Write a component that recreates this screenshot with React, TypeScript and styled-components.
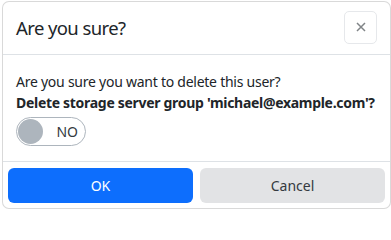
import styled, { createGlobalStyle } from "styled-components";

const GlobalStyle = createGlobalStyle`
  html, body {
    margin: 0;
    padding: 0;
    background: #ffffff;
  }
  body {
    font-family: "Noto Sans", "Open Sans", sans-serif;
    color: #212529;
    overflow: hidden;
  }
`;

const Page = styled.div`
  width: 391px;
  height: 210px;
  padding: 1px 0 0 2px;
  box-sizing: border-box;
  overflow: hidden;
`;

const Modal = styled.div`
  width: 389px;
  height: 208px;
  box-sizing: border-box;
  border: 1px solid rgba(0, 0, 0, 0.15);
  border-radius: 7px;
  display: flex;
  flex-direction: column;
  background: #fff;
`;

const Header = styled.div`
  height: 53px;
  box-sizing: border-box;
  display: flex;
  align-items: center;
  justify-content: space-between;
  padding: 0 13px 2px 13px;
  border-bottom: 1px solid #dee2e6;
`;

const Title = styled.h5`
  margin: 0;
  font-size: 18.5px;
  font-weight: 400;
  letter-spacing: -0.6px;
`;

const CloseButton = styled.button`
  width: 33px;
  height: 33px;
  border: 1px solid #e6e8eb;
  border-radius: 5px;
  background: #fff;
  display: flex;
  align-items: center;
  justify-content: center;
  padding: 0;
  color: #808487;
`;

const Body = styled.div`
  padding: 16px 13px 0;
  height: 107px;
  box-sizing: border-box;
  border-bottom: 1px solid #dee2e6;
`;

const Line = styled.p<{ $bold?: boolean }>`
  margin: 0;
  font-size: 14px;
  line-height: 21px;
  font-weight: ${(p) => (p.$bold ? 700 : 400)};
  letter-spacing: ${(p) => (p.$bold ? "-0.3px" : "-0.25px")};
`;

const Toggle = styled.div`
  margin-top: 4px;
  width: 70px;
  height: 29px;
  box-sizing: border-box;
  border: 1px solid #adb5bd;
  border-radius: 15px;
  display: flex;
  align-items: center;
  padding: 0 7px 0 1px;
  justify-content: space-between;
`;

const Knob = styled.span`
  width: 25px;
  height: 25px;
  border-radius: 50%;
  background: #adb5bd;
`;

const ToggleLabel = styled.span`
  font-size: 14px;
  color: #343a40;
`;

const Footer = styled.div`
  flex: 1;
  display: flex;
  gap: 7px;
  padding: 6px 5px 0 5px;
  box-sizing: border-box;
`;

const Action = styled.button<{ $primary?: boolean }>`
  flex: 1;
  height: 35px;
  border: none;
  border-radius: 6px;
  font-family: inherit;
  font-size: 14px;
  background: ${(p) => (p.$primary ? "#0d6efd" : "#e2e3e5")};
  color: ${(p) => (p.$primary ? "#ffffff" : "#343a40")};
`;

export default function App() {
  return (
    <>
      <GlobalStyle />
      <Page>
        <Modal>
          <Header>
            <Title>Are you sure?</Title>
            <CloseButton aria-label="Close">
              <svg width="10" height="10" viewBox="0 0 10 10">
                <path d="M1 1L9 9M9 1L1 9" stroke="currentColor" strokeWidth="1.5" />
              </svg>
            </CloseButton>
          </Header>
          <Body>
            <Line>Are you sure you want to delete this user?</Line>
            <Line $bold>Delete storage server group 'michael@example.com'?</Line>
            <Toggle>
              <Knob />
              <ToggleLabel>NO</ToggleLabel>
            </Toggle>
          </Body>
          <Footer>
            <Action $primary>OK</Action>
            <Action>Cancel</Action>
          </Footer>
        </Modal>
      </Page>
    </>
  );
}
